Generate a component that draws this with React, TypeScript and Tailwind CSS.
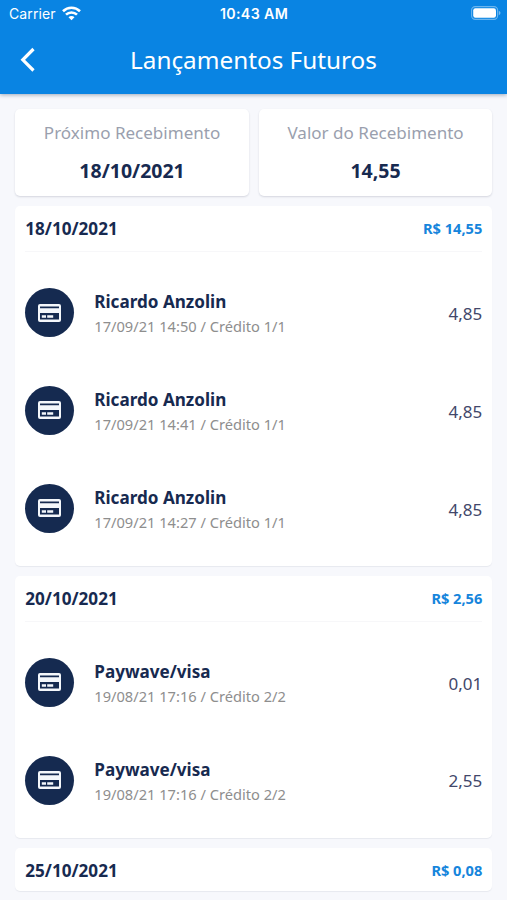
type Entry = { name: string; detail: string; value: string };
type Group = { date: string; total: string; entries: Entry[] };

const groups: Group[] = [
  {
    date: '18/10/2021',
    total: 'R$ 14,55',
    entries: [
      { name: 'Ricardo Anzolin', detail: '17/09/21 14:50 / Crédito 1/1', value: '4,85' },
      { name: 'Ricardo Anzolin', detail: '17/09/21 14:41 / Crédito 1/1', value: '4,85' },
      { name: 'Ricardo Anzolin', detail: '17/09/21 14:27 / Crédito 1/1', value: '4,85' },
    ],
  },
  {
    date: '20/10/2021',
    total: 'R$ 2,56',
    entries: [
      { name: 'Paywave/visa', detail: '19/08/21 17:16 / Crédito 2/2', value: '0,01' },
      { name: 'Paywave/visa', detail: '19/08/21 17:16 / Crédito 2/2', value: '2,55' },
    ],
  },
  { date: '25/10/2021', total: 'R$ 0,08', entries: [] },
];

function CardIcon() {
  return (
    <svg width="23" height="18" viewBox="0 0 23 18">
      <rect width="23" height="18" rx="2" fill="#f4f7fb" />
      <path d="M2 2.500h19v1.700h-19zM2 9h19v6.500h-19z" fill="#152a50" />
      <path d="M3.800 11.300h4.200v2.400H3.800zM9.200 11.300h6v2.400h-6z" fill="#f4f7fb" />
    </svg>
  );
}

function StatusBar() {
  return (
    <div className="grid h-7 grid-cols-3 items-center pl-[9px] pr-[6px] font-['Inter',sans-serif] text-[14px] leading-7">
      <div className="flex items-center gap-[6px]">
        <span className="text-[14px] tracking-[0.1px]">Carrier</span>
        <svg className="-mt-[2px]" width="19" height="15" viewBox="0 0 19 15" fill="none" stroke="#fff" strokeWidth="2.6">
          <path d="M1 5.2a12.2 12.2 0 0 1 17 0" />
          <path d="M4 8.7a7.8 7.8 0 0 1 11 0" />
          <path d="M9.5 14.3 6.5 11.2a4.2 4.2 0 0 1 6 0Z" fill="#fff" stroke="none" />
        </svg>
      </div>
      <span className="-ml-[2px] text-center text-[14.2px] font-semibold tracking-[0.35px]">10:43 AM</span>
      <svg className="-mt-[2px] justify-self-end" width="30" height="14" viewBox="0 0 30 14">
        <rect x="0.6" y="0.6" width="26" height="12.8" rx="3.6" fill="none" stroke="#fff" strokeOpacity="0.4" strokeWidth="1.1" />
        <rect x="2.2" y="2.2" width="22.8" height="9.6" rx="2.2" fill="#fff" />
        <path d="M27.8 4.8c2.2.8 2.2 3.600 0 4.400z" fill="#fff" fillOpacity="0.45" />
      </svg>
    </div>
  );
}

function SummaryCard({ label, value }: { label: string; value: string }) {
  return (
    <div className="flex h-[87px] flex-1 flex-col items-center rounded-[5px] bg-white pt-3 shadow-[0_1px_2px_rgba(30,40,70,0.16)]">
      <span className="text-[17.05px] leading-6 text-[#9a9fae]">{label}</span>
      <span className="mt-[14px] text-[19.5px] font-bold leading-6">{value}</span>
    </div>
  );
}

function GroupCard({ group }: { group: Group }) {
  const filled = group.entries.length > 0;
  return (
    <section className="rounded-[5px] bg-white px-[10px] shadow-[0_1px_1px_rgba(30,40,70,0.07)]">
      <div className={`flex items-center justify-between ${filled ? 'h-[46px] border-b border-[#f7f7f9]' : 'h-[43px] pt-[3px]'}`}>
        <span className="text-[17.1px] font-bold">{group.date}</span>
        <span className="text-[14.6px] font-bold text-[#1685dc]">{group.total}</span>
      </div>
      {filled && (
        <div className="pb-[8.800px] pt-[11.400px]">
          {group.entries.map((e, i) => (
            <div key={i} className="flex h-[97.8px] items-center">
              <div className="flex size-[49px] items-center justify-center rounded-full bg-[#152a50]">
                <CardIcon />
              </div>
              <div className="ml-5 flex flex-1 flex-col pt-[3px]">
                <span className="text-[17.1px] font-bold leading-6">{e.name}</span>
                <span className="text-[14.65px] leading-6 text-[#8e8e8e]">{e.detail}</span>
              </div>
              <span className="mt-[2px] text-[17px] text-[#42476a]">{e.value}</span>
            </div>
          ))}
        </div>
      )}
    </section>
  );
}

export default function App() {
  return (
    <div className="h-[900px] w-full overflow-hidden bg-[#f7f8fc] font-['Noto_Sans',sans-serif] text-[#172a50]">
      <header className="h-[94px] bg-[#0984e3] text-white shadow-[0_1px_4px_rgba(20,50,90,0.4)]">
        <StatusBar />
        <div className="grid h-16 grid-cols-[54px_1fr_54px] items-center">
          <svg className="ml-5" width="16" height="26" viewBox="0 0 16 26" fill="none">
            <path d="M13.500 2 2.800 12.800l10.700 10.700" stroke="#fff" strokeWidth="3.200" />
          </svg>
          <h1 className="text-center text-[24.300px]">Lançamentos Futuros</h1>
        </div>
      </header>
      <main className="flex flex-col gap-[10px] pl-[15.300px] pr-[14.700px] pt-[15.400px]">
        <div className="flex gap-[10px]">
          <SummaryCard label="Próximo Recebimento" value="18/10/2021" />
          <SummaryCard label="Valor do Recebimento" value="14,55" />
        </div>
        {groups.map((g) => (
          <GroupCard key={g.date} group={g} />
        ))}
      </main>
    </div>
  );
}
